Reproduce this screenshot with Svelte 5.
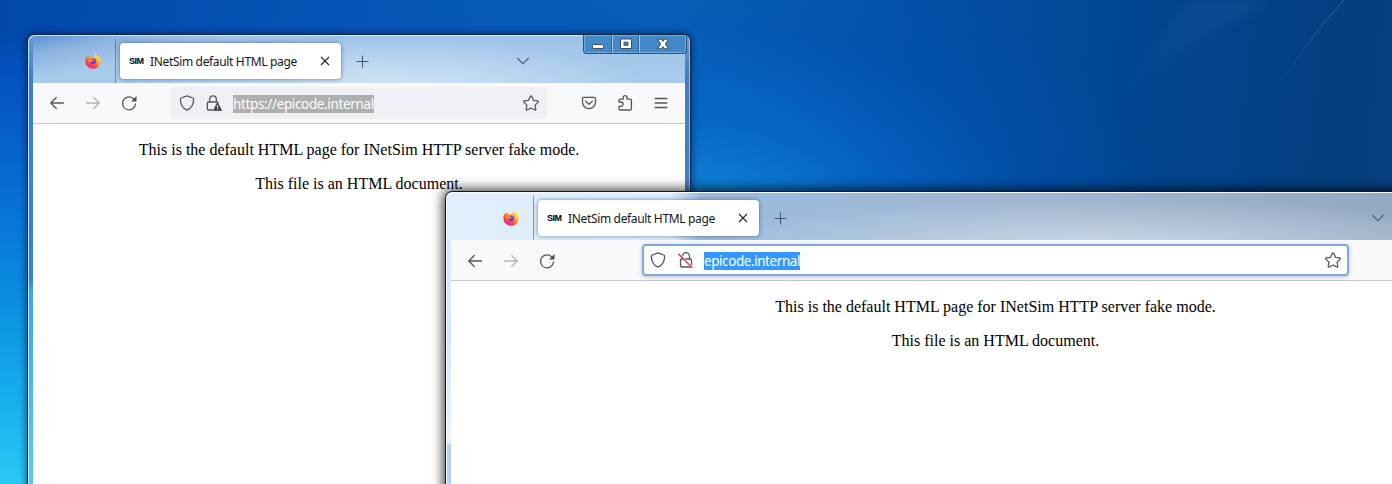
<script>
  const windows = [
    { id: 'first', url: 'https://epicode.internal', focused: false },
    { id: 'second', url: 'epicode.internal', focused: true }
  ];
</script>

{#snippet fox()}
  <svg class="fox" width="16" height="16" viewBox="0 0 16 16">
    <defs>
      <linearGradient id="flame" x1="0.85" y1="0.1" x2="0.2" y2="0.95">
        <stop offset="0" stop-color="#fff44f" /><stop offset="0.35" stop-color="#ffb02e" />
        <stop offset="0.65" stop-color="#ff4a3c" /><stop offset="1" stop-color="#e8208c" />
      </linearGradient>
      <linearGradient id="globe" x1="0.7" y1="0" x2="0.3" y2="1">
        <stop offset="0" stop-color="#a94be8" /><stop offset="1" stop-color="#4a3fc4" />
      </linearGradient>
    </defs>
    <path fill="url(#flame)" d="M10.2.2c1.1.7 1.7 1.6 1.9 2.5.5.3 1 .8 1.3 1.4.1-.3.1-.6 0-.9 1.6 1.4 2.4 3.4 2.2 5.7-.3 3.800-3.500 6.900-7.500 6.900C3.800 15.800.4 12.500.4 8.300.3 6 1.200 4 2.400 2.700c0 .5 0 .8.2 1.100C3 3 3.600 2.400 4.200 2.100c0 .8.300 1.500.8 1.900.9-.2 1.700 0 2.400.4 1-.300 1.700-.6 2-1.100.6-.9.9-2 .8-3.100z" />
    <path fill="url(#globe)" d="M7.800 5.200c2-.4 3.700 1 3.700 2.900 0 1.800-1.500 3.100-3.400 3.100-2 0-3.500-1.200-3.600-2.800 1 .7 2 .6 2.700.1.500-.4 1.100-.5 1.500-.9-.4-.6-1.400-.6-2.300-.6.100-.7.700-1.500 1.400-1.800z" />
    <path fill="#ff8a2d" d="M2.700 4.100c1.100-.4 2.800-.2 4.300 1.100-.8.300-1 .9-1.100 1.500l2.500.6c-.300.800-1.100.9-1.600 1.300-.8.500-1.700.4-2.500-.2.100 1.600 1.500 2.700 3.500 2.800-2.300.6-4.600-.9-5.200-3.300-.3-1.300-.3-2.800.1-3.800z" opacity=".85" />
  </svg>
{/snippet}

{#snippet back()}
  <svg class="ico" viewBox="0 0 16 16"><path d="M14.500 8H1.800M7.300 2.500 1.800 8l5.500 5.500" /></svg>
{/snippet}

{#snippet star()}
  <svg class="ico star" viewBox="0 0 16 16"><path d="M8 .9c.3 0 .5.200.6.400l1.900 4 4.200.6c.7.100.9.700.4 1.200l-3 3 .7 4.200c.1.600-.4 1-.9.700L8 13l-3.900 2c-.5.300-1-.1-.9-.7l.7-4.200-3-3c-.5-.5-.3-1.100.4-1.200l4.200-.6 1.900-4c.1-.2.300-.4.600-.4z" /></svg>
{/snippet}

<main class="desktop">
  <svg class="rays" viewBox="0 0 1392 484" preserveAspectRatio="none">
    <defs>
      <linearGradient id="ray" x1="1" y1="0" x2="0" y2="1">
        <stop offset="0" stop-color="#9cc9ee" stop-opacity=".32" />
        <stop offset="1" stop-color="#9cc9ee" stop-opacity="0" />
      </linearGradient>
    </defs>
    <path fill="none" stroke="url(#ray)" d="M1344 0Q1303 44 1274 96" />
    <path class="fan" fill="url(#ray)" d="M1190 0h85Q1190 40 1110 110 1150 40 1190 0z" />
  </svg>

  {#each windows as w (w.id)}
    <section class="window {w.id}">
      <div class="chrome">
        <header class="strip">
          <div class="pinned">{@render fox()}</div>
          <div class="tab">
            <b>SIM</b>
            <span class="title">INetSim default HTML page</span>
            <svg class="close" viewBox="0 0 10 10"><path d="M1 1l8 8M9 1L1 9" /></svg>
          </div>
          <svg class="plus" viewBox="0 0 13 13"><path d="M6.500 .5v12M.5 6.500h12" /></svg>
          <svg class="chevron" viewBox="0 0 14 8"><path d="M1.200 1 7 6.700 12.800 1" /></svg>
        </header>

        <nav class="toolbar">
          {@render back()}
          <div class="forward">{@render back()}</div>
          <svg class="ico reload" viewBox="0 0 16 16"><path d="M13 4.200A6.500 6.500 0 1 0 14.500 8.800" /><path class="solid" d="M15.500 1v4.900c0 .3-.2.500-.5.500h-4.900z" /></svg>
          <div class="urlbar" class:focused={w.focused}>
            <svg class="ico" viewBox="0 0 16 16"><path d="M8 .9 13.700 3c.6.200.9.600.9 1.200 0 4.600-1.300 8.700-6.600 10.900C2.700 12.900 1.400 8.800 1.400 4.200c0-.6.300-1 .9-1.200z" /></svg>
            {#if w.focused}
              <svg class="ico lock" viewBox="0 0 16 16"><path d="M4.500 7V4.200a3.500 3.500 0 0 1 7 0V7M4 7h8.200c.8 0 1.300.5 1.300 1.300v5.400c0 .8-.5 1.300-1.300 1.300H3.800c-.8 0-1.300-.5-1.300-1.300V8.300C2.500 7.500 3 7 3.800 7z" /><path class="halo" d="M1.500 2.200 14.600 15.300" /><path class="slash" d="M.8 2.200 14 15.400" /></svg>
            {:else}
              <svg class="ico lock" viewBox="0 0 16 16"><path d="M3.700 7V4.200a3.300 3.300 0 0 1 6.600 0V7M6.500 15H2.600c-.8 0-1.300-.5-1.300-1.300V8.300C1.300 7.500 1.800 7 2.600 7h8.100c.7 0 1.100.3 1.300.8" /><path class="solid" d="M10.900 7.800c.3-.5.9-.5 1.200 0l3.600 6.900c.3.600 0 1.300-.7 1.300H8c-.7 0-1-.7-.7-1.300z" /><path class="mark" d="M11.500 10.300v2.500M11.500 13.700v1.100" /></svg>
            {/if}
            <span class="address">{w.url}</span>
            {@render star()}
          </div>
          <div class="actions">
            <svg class="ico" viewBox="0 0 16 16"><path d="M2.800 2.400h10.400c.8 0 1.300.6 1.300 1.400v3.400a6.500 6.500 0 0 1-13 0V3.800c0-.8.500-1.400 1.300-1.400zM4.700 6.200 8 9.400l3.300-3.200" /></svg>
            <svg class="ico" viewBox="0 0 16 16"><path d="M2 7V5.200c0-.6.400-1 1-1h3.200V2.500a1.900 1.900 0 0 1 3.800 0v1.700h3.200c.7 0 1.200.5 1.200 1.200v8.400c0 .7-.5 1.200-1.200 1.200H3.200c-.7 0-1.200-.5-1.200-1.200v-2.500h1.900a2 2 0 0 0 0-4.300H2z" /></svg>
            <svg class="ico" viewBox="0 0 16 16"><path d="M2.200 3.500h11.600M2.200 8h11.600M2.200 12.500h11.600" /></svg>
          </div>
        </nav>

        <article>
          <p>This is the default HTML page for INetSim HTTP server fake mode.</p>
          <p>This file is an HTML document.</p>
        </article>
      </div>

      {#if !w.focused}
        <div class="controls">
          <i><svg viewBox="0 0 14 14"><rect x="1.500" y="7.500" width="11" height="4" rx=".8" /></svg></i>
          <i><svg viewBox="0 0 14 14"><path fill-rule="evenodd" d="M1.500 2h11v9.500h-11zM5 5.200v3.100h4V5.200z" /></svg></i>
          <i><svg viewBox="0 0 14 14"><path d="M1.500 2.200h4L7 4.400l1.500-2.200h4L9.300 7l3.200 4.800h-4L7 9.600l-1.500 2.200h-4L4.700 7z" /></svg></i>
        </div>
      {/if}
    </section>
  {/each}
</main>

<style>
  .desktop {
    position: relative;
    width: 1392px;
    height: 484px;
    overflow: hidden;
    background:
      linear-gradient(rgba(3, 78, 184, 0) 0, rgba(3, 78, 184, 0) 34px, #0553c0 80px, #0668d0 170px, #0b8de0 300px, #16b0ee 400px, #2cc8f4 484px) 0 0 / 60px 100% no-repeat,
      radial-gradient(ellipse 480px 290px at 690px 235px, rgba(20, 146, 224, .95), rgba(6, 108, 208, .7) 38%, rgba(2, 82, 184, .35) 72%, transparent 100%),
      linear-gradient(97deg, #0248ab 0, #0655b6 25%, #0a63b8 46%, #0450a8 62%, #01458f 80%, #053f80 93%, #0a4180 100%);
  }
  .rays { position: absolute; inset: 0; width: 100%; height: 100%; }
  .fan { opacity: .2; filter: blur(6px); }

  .window {
    position: absolute;
    box-sizing: border-box;
    border: 1px solid #12263d;
    border-bottom: 0;
    border-radius: 7px 7px 0 0;
  }
  .first {
    left: 27px;
    top: 34px;
    width: 664px;
    height: 470px;
    padding: 0 5px 0 5px;
    background:
      linear-gradient(168deg, #5a91d6 0, #8db4e0 20px, transparent 43px) 5px 0 / 300px 48px no-repeat,
      radial-gradient(ellipse 260px 50px at 350px 52px, #d0e4f6, transparent) 5px 0 / 652px 48px no-repeat,
      linear-gradient(#9fc3e8, #a9cceb) 5px 0 / 652px 48px no-repeat,
      linear-gradient(#6b9dd0, #3f80c4 40px, #3b82c8 245px, #3ba6e8 255px, #5ccdf5);
    box-shadow: inset 1px 1px 0 rgba(215, 238, 255, .85), inset -1px 0 0 rgba(190, 220, 245, .7), 0 0 7px 1px rgba(0, 20, 60, .6);
  }
  .second {
    left: 445px;
    top: 191px;
    width: 1100px;
    height: 310px;
    padding: 0 4px 0 5px;
    border-color: #0b1724;
    background:
      linear-gradient(90deg, #e0eefc 0, #dfecfb 225px, transparent 255px) 0 0 / 100% 48px no-repeat,
      radial-gradient(ellipse 420px 46px at 660px 54px, rgba(210, 222, 235, .85), transparent) 0 0 / 100% 48px no-repeat,
      linear-gradient(90deg, #9cbcdc 0, #9bbbdc 330px, #a0b5cf 600px, #94a9c1 950px) 0 0 / 100% 48px no-repeat,
      linear-gradient(#d8eafd 0, #d3e7fc 150px, #e9f4fe 251px, #b4d2f4 252px);
    box-shadow: inset 1px 1px 0 rgba(245, 251, 255, .95), 0 0 12px 2px rgba(0, 0, 0, .75);
  }
  .chrome { display: flex; flex-direction: column; height: 100%; }
  .strip { display: flex; align-items: center; flex: none; height: 48px; }
  .pinned {
    box-sizing: border-box;
    width: 83px;
    height: 44px;
    align-self: flex-end;
    border-right: 1px solid rgba(70, 105, 155, .65);
    padding: 14px 0 0 52px;
  }
  .fox { display: block; }
  .tab {
    box-sizing: border-box;
    display: flex;
    align-items: center;
    width: 221px;
    height: 36px;
    margin: 4px 0 0 4px;
    padding: 0 11px 0 9px;
    border-radius: 4px;
    background: #fff;
    box-shadow: 0 0 4px rgba(30, 55, 95, .6);
    font: 12px 'Noto Sans', sans-serif;
    color: #15141a;
  }
  .tab b { width: 21px; font: bold 9px 'Liberation Sans', sans-serif; letter-spacing: -.5px; color: #000; }
  .title { flex: 1; white-space: nowrap; letter-spacing: -.34px; }
  .close { width: 10px; height: 10px; fill: none; stroke: #222; stroke-width: 1.1; }
  .plus { width: 13px; height: 13px; margin: 4px 0 0 15px; fill: none; stroke: #46566c; stroke-width: 1.1; }
  .chevron { width: 14px; height: 8px; margin: 3px 0 0 147px; fill: none; stroke: #4c5f79; stroke-width: 1.200; }
  .second .chevron { margin-left: 584px; }

  .toolbar {
    box-sizing: border-box;
    display: flex;
    align-items: center;
    flex: none;
    height: 41px;
    padding-left: 16px;
    border-bottom: 1px solid #c7c7cc;
    background: #f9f9fb;
  }
  .ico {
    display: block;
    flex: none;
    width: 16px;
    height: 16px;
    fill: none;
    stroke: #55545d;
    stroke-width: 1.300;
    stroke-linecap: round;
    stroke-linejoin: round;
    overflow: visible;
  }
  .second .toolbar > .ico, .second .forward { position: relative; top: 1px; }
  .solid { fill: #4b4a53; stroke: none; }
  .mark { stroke: #f0f0f4; stroke-width: 1.100; stroke-linecap: butt; }
  .halo { stroke: #fff; stroke-width: 1.500; }
  .slash { stroke: #e22850; stroke-width: 1.300; }
  .forward { margin: 0 20px; transform: scaleX(-1); opacity: .42; }
  .urlbar {
    box-sizing: border-box;
    display: flex;
    align-items: center;
    width: 376px;
    height: 32px;
    margin-left: 34px;
    padding: 0 8px;
    border-radius: 4px;
    background: #f0f0f4;
  }
  .urlbar .lock { margin: 0 11px 0 11px; }
  .urlbar .star { margin-left: auto; }
  .address {
    box-sizing: border-box;
    width: 141px;
    height: 18px;
    margin-top: 1px;
    font: 13.500px/19px 'Noto Sans', sans-serif;
    letter-spacing: -.36px;
    white-space: nowrap;
    color: #fff;
    background: #afafaf;
  }
  .focused {
    width: 707px;
    margin-left: 87px;
    padding: 0 6px;
    border: 2px solid #80a8e4;
    background: #fff;
    box-shadow: 0 1px 4px rgba(40, 60, 100, .3);
  }
  .focused .lock { margin: 0 10px 0 12px; }
  .focused .address { width: 96px; background: #3399ff; letter-spacing: -.43px; }
  .actions { display: flex; gap: 20px; margin-left: 34px; }
  .second .actions { margin-left: 86px; }

  article {
    flex: 1;
    padding-top: 17px;
    background: #fff;
    font: 16px/18px 'Liberation Serif', serif;
    color: #000;
    text-align: center;
  }
  p { margin: 0 0 16px; }

  .controls {
    position: absolute;
    top: 0;
    right: 3px;
    display: grid;
    grid-template-columns: 28px 27px 47px;
    width: 102px;
    height: 18px;
    border: 1px solid #285481;
    border-top: 0;
    border-radius: 0 0 4px 4px;
    background: #4388c9;
    box-shadow: inset 0 0 0 1px rgba(150, 195, 235, .6);
  }
  .controls i { display: flex; align-items: center; justify-content: center; }
  .controls i + i { border-left: 1px solid #aacbe8; box-shadow: -1px 0 #316598; }
  .controls svg { width: 14px; height: 14px; fill: #fff; stroke: #3c4e63; stroke-width: 1; }
</style>
